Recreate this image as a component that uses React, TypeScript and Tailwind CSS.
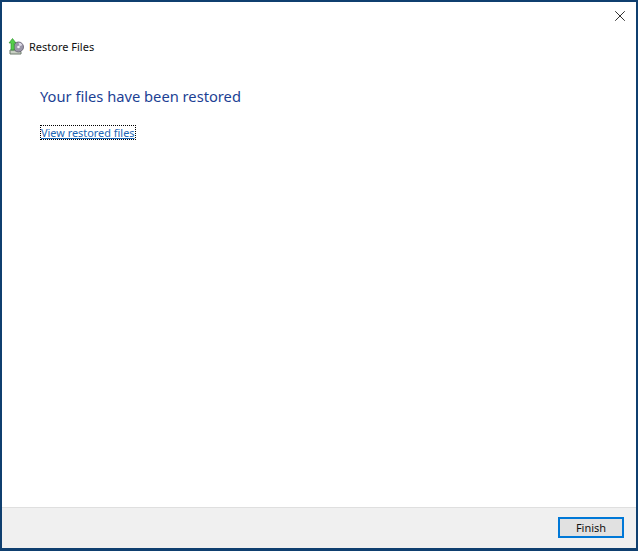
import { X } from 'lucide-react';

function RestoreIcon() {
  return (
    <svg width="17" height="17" viewBox="0 0 17 17" className="shrink-0">
      {/* tray */}
      <path d="M2 12h9l2 2v2H2z" fill="#c9d0c4" stroke="#6d7a6c" strokeWidth="1" />
      {/* disc */}
      <circle cx="10.5" cy="9" r="5" fill="#9a96a8" stroke="#5f5b6b" strokeWidth="0.8" />
      <circle cx="10.5" cy="9" r="1.3" fill="#f0f0f4" />
      <path d="M10.5 4.5a4.5 4.5 0 0 1 4 2.6l-3 1.2z" fill="#dedbe8" />
      {/* green arrow */}
      <path d="M4.5 0.5 8 5H6.2v7H3V5H1z" fill="#55cf4a" stroke="#2a8a28" strokeWidth="0.6" />
    </svg>
  );
}

export default function App() {
  return (
    <div className="h-[551px] w-[638px] overflow-hidden border-t-2 border-r-2 border-b-[3px] border-l-2 border-[#0f3f6f] bg-white font-['Noto_Sans','Open_Sans',sans-serif]">
      <div className="flex h-full flex-col">
        <div className="flex-1">
          <div className="flex justify-end pt-[5px] pr-[7px]">
            <X className="h-[18px] w-[18px] text-[#1a1a1a]" strokeWidth={1.2} />
          </div>
          <div className="mt-[13px] flex items-center gap-[4px] pl-[6px]">
            <RestoreIcon />
            <span className="text-[11px] leading-4 text-[#111]">Restore Files</span>
          </div>
          <h1 className="mt-[31px] pl-[38px] text-[14.7px] leading-5 text-[#1c3f94]">
            Your files have been restored
          </h1>
          <div className="mt-[13px] pl-[38px]">
            <a className="inline-block border border-dotted border-black text-[10.9px] leading-[13px] text-[#1e66b4] underline">
              View restored files
            </a>
          </div>
        </div>
        <div className="flex h-[41px] items-start justify-end border-t border-[#dfdfdf] bg-[#f0f0f0] pt-[9px] pr-[12px]">
          <button className="h-[21px] w-[66px] border-2 border-[#0078d7] bg-[#e1e1e1] text-[11px] leading-none text-[#111]">
            Finish
          </button>
        </div>
      </div>
    </div>
  );
}
